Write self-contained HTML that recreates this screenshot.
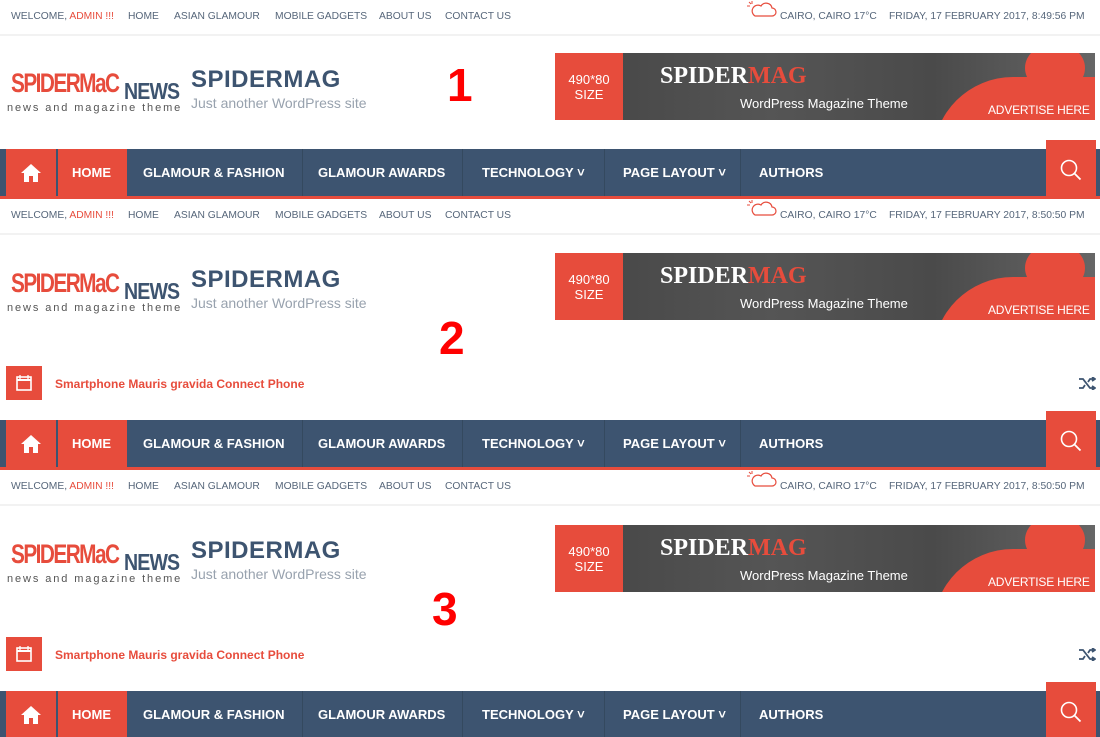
<!DOCTYPE html>
<html><head><meta charset="utf-8"><style>
*{margin:0;padding:0;box-sizing:border-box}
body{width:1100px;height:737px;overflow:hidden;background:#fff;font-family:"Liberation Sans",Arial,sans-serif;position:relative}
.sec{position:absolute;left:0;width:1100px}
.a{position:absolute;white-space:nowrap}
.tb{font-size:10.3px;color:#56667a;top:11px}
.tb b{font-weight:normal;color:#e74c3c}
.hr{position:absolute;left:0;width:1100px;top:34px;height:2px;background:#f2f2f2}
.logo1{font-family:"Liberation Sans",sans-serif;font-weight:bold;color:#e74c3c;font-size:27px;letter-spacing:-2px;transform:scaleX(.77);transform-origin:left;left:11px;top:68px}
.logo2{font-weight:bold;color:#3d5470;font-size:23px;letter-spacing:-1px;transform:scaleX(.85);transform-origin:left;left:124px;top:78px}
.tag{font-size:11px;letter-spacing:1.9px;color:#555;left:7px;top:102px}
.title{font-size:24px;color:#3d5470;font-weight:bold;left:191px;top:66px;letter-spacing:.5px}
.sub{font-size:14px;color:#98a2ae;left:191px;top:95px}
.ban{position:absolute;left:555px;top:53px;width:540px;height:67px;background:linear-gradient(90deg,#444 0%,#555 40%,#4a4a4a 70%,#666 100%);overflow:hidden}
.ban .sz{position:absolute;left:0;top:0;width:68px;height:67px;background:#e74c3c;color:#fff;font-size:13px;text-align:center;padding-top:19px;line-height:15px}
.ban .blob{position:absolute;left:378px;top:24px;width:190px;height:110px;border-radius:80px 0 0 0;background:#e74c3c}
.ban .blob2{position:absolute;left:470px;top:-10px;width:60px;height:50px;border-radius:50%;background:#e74c3c}
.ban .sp{position:absolute;left:105px;top:10px;font-family:"Liberation Serif",serif;font-weight:bold;font-size:24px;color:#fff}
.ban .sp i{font-style:normal;color:#e74c3c}
.ban .wp{position:absolute;left:185px;top:43px;color:#fff;font-size:13px;white-space:nowrap}
.ban .ad{position:absolute;left:433px;top:50px;color:#fff;font-size:12px;letter-spacing:-.2px;white-space:nowrap}
.nav{position:absolute;left:0;width:1100px;height:50px;background:#3d5470;border-bottom:3px solid #e74c3c}
.nav .home{position:absolute;left:6px;top:0;width:50px;height:47px;background:#e74c3c}
.nav .hact{position:absolute;left:58px;top:0;width:69px;height:47px;background:#e74c3c}
.nav .it{position:absolute;top:16px;color:#fff;font-weight:bold;font-size:13px;white-space:nowrap}
.nav .sep{position:absolute;top:0;width:1px;height:47px;background:#34495f}
.srch{position:absolute;left:1046px;width:50px;height:57px;background:#e74c3c}
.num{font-weight:bold;color:#f00;font-size:46px}
.tk{position:absolute;left:6px;width:36px;height:34px;background:#e74c3c}
.tkt{font-weight:bold;color:#e74c3c;font-size:12px;left:55px}
</style></head><body>

<div class="sec" style="top:0;height:200px">
 <div class="a tb" style="left:11px">WELCOME, <b>ADMIN !!!</b></div>
 <div class="a tb" style="left:128px">HOME</div><div class="a tb" style="left:174px">ASIAN GLAMOUR</div><div class="a tb" style="left:275px">MOBILE GADGETS</div><div class="a tb" style="left:379px">ABOUT US</div><div class="a tb" style="left:445px">CONTACT US</div>
 <svg class="a" style="left:746px;top:0" width="32" height="20" viewBox="0 0 32 20"><path d="M6 1v3M1 6h3M3 2l2 2" stroke="#e74c3c" fill="none"/><path d="M9 16h17a4 4 0 0 0 0-8a6 6 0 0 0-11-2a4 4 0 0 0-6 10z" stroke="#e74c3c" fill="none" stroke-width="1.2"/></svg>
 <div class="a tb" style="left:780px">CAIRO, CAIRO 17°C</div><div class="a tb" style="left:889px">FRIDAY, 17 FEBRUARY 2017, 8:49:56 PM</div>
 <div class="hr"></div>
 <div class="a logo1">SPIDERMaC</div><div class="a logo2">NEWS</div><div class="a tag">news and magazine theme</div>
 <div class="a title">SPIDERMAG</div><div class="a sub">Just another WordPress site</div>
 <div class="a num" style="left:447px;top:58px">1</div>
 <div class="ban"><div class="blob"></div><div class="blob2"></div><div class="sz">490*80<br>SIZE</div><div class="sp">SPIDER<i>MAG</i></div><div class="wp">WordPress Magazine Theme</div><div class="ad">ADVERTISE HERE</div></div>
 <div class="nav" style="top:149px"><div class="home"><svg style="position:absolute;left:14px;top:14px" width="22" height="20" viewBox="0 0 22 20"><path d="M11 1L1 10h3v9h5v-6h4v6h5v-9h3z" fill="#fff"/></svg></div><div class="hact"></div>
 <div class="it" style="left:72px">HOME</div><div class="it" style="left:143px">GLAMOUR &amp; FASHION</div><div class="sep" style="left:302px"></div><div class="it" style="left:318px">GLAMOUR AWARDS</div><div class="sep" style="left:462px"></div><div class="it" style="left:482px">TECHNOLOGY ˅</div><div class="sep" style="left:604px"></div><div class="it" style="left:623px">PAGE LAYOUT ˅</div><div class="sep" style="left:740px"></div><div class="it" style="left:759px">AUTHORS</div></div>
 <div class="srch" style="top:140px"><svg style="position:absolute;left:13px;top:18px" width="24" height="24" viewBox="0 0 24 24"><circle cx="10" cy="10" r="7.5" stroke="#fff" stroke-width="1.6" fill="none"/><path d="M15.5 15.5l6 6" stroke="#fff" stroke-width="1.8"/></svg></div>
</div>

<div class="sec" style="top:199px;height:272px">
 <div class="a tb" style="left:11px">WELCOME, <b>ADMIN !!!</b></div>
 <div class="a tb" style="left:128px">HOME</div><div class="a tb" style="left:174px">ASIAN GLAMOUR</div><div class="a tb" style="left:275px">MOBILE GADGETS</div><div class="a tb" style="left:379px">ABOUT US</div><div class="a tb" style="left:445px">CONTACT US</div>
 <svg class="a" style="left:746px;top:0" width="32" height="20" viewBox="0 0 32 20"><path d="M6 1v3M1 6h3M3 2l2 2" stroke="#e74c3c" fill="none"/><path d="M9 16h17a4 4 0 0 0 0-8a6 6 0 0 0-11-2a4 4 0 0 0-6 10z" stroke="#e74c3c" fill="none" stroke-width="1.2"/></svg>
 <div class="a tb" style="left:780px">CAIRO, CAIRO 17°C</div><div class="a tb" style="left:889px">FRIDAY, 17 FEBRUARY 2017, 8:50:50 PM</div>
 <div class="hr"></div>
 <div class="a logo1" style="top:69px">SPIDERMaC</div><div class="a logo2" style="top:79px">NEWS</div><div class="a tag" style="top:103px">news and magazine theme</div>
 <div class="a title" style="top:67px">SPIDERMAG</div><div class="a sub" style="top:96px">Just another WordPress site</div>
 <div class="a num" style="left:439px;top:112px">2</div>
 <div class="ban" style="top:54px"><div class="blob"></div><div class="blob2"></div><div class="sz">490*80<br>SIZE</div><div class="sp">SPIDER<i>MAG</i></div><div class="wp">WordPress Magazine Theme</div><div class="ad">ADVERTISE HERE</div></div>
 <div class="tk" style="top:167px"><svg style="position:absolute;left:9px;top:8px" width="18" height="18" viewBox="0 0 18 18"><rect x="2" y="3" width="14" height="13" fill="none" stroke="#fff" stroke-width="1.6"/><path d="M2 6h14" stroke="#fff" stroke-width="2"/><path d="M5 1v4M13 1v4" stroke="#fff" stroke-width="1.3"/></svg></div>
 <div class="a tkt" style="top:178px">Smartphone Mauris gravida Connect Phone</div>
 <svg class="a" style="left:1079px;top:178px" width="17" height="13" viewBox="0 0 17 13"><path d="M0 2h4l7 9h5M0 11h4l2-3M9 5l2-3h5M13 0l3 2-3 2M13 9l3 2-3 2" stroke="#3d5470" stroke-width="1.8" fill="none"/></svg>
 <div class="nav" style="top:221px"><div class="home"><svg style="position:absolute;left:14px;top:14px" width="22" height="20" viewBox="0 0 22 20"><path d="M11 1L1 10h3v9h5v-6h4v6h5v-9h3z" fill="#fff"/></svg></div><div class="hact"></div>
 <div class="it" style="left:72px">HOME</div><div class="it" style="left:143px">GLAMOUR &amp; FASHION</div><div class="sep" style="left:302px"></div><div class="it" style="left:318px">GLAMOUR AWARDS</div><div class="sep" style="left:462px"></div><div class="it" style="left:482px">TECHNOLOGY ˅</div><div class="sep" style="left:604px"></div><div class="it" style="left:623px">PAGE LAYOUT ˅</div><div class="sep" style="left:740px"></div><div class="it" style="left:759px">AUTHORS</div></div>
 <div class="srch" style="top:212px"><svg style="position:absolute;left:13px;top:18px" width="24" height="24" viewBox="0 0 24 24"><circle cx="10" cy="10" r="7.5" stroke="#fff" stroke-width="1.6" fill="none"/><path d="M15.5 15.5l6 6" stroke="#fff" stroke-width="1.8"/></svg></div>
</div>

<div class="sec" style="top:470px;height:267px;overflow:hidden">
 <div class="a tb" style="left:11px">WELCOME, <b>ADMIN !!!</b></div>
 <div class="a tb" style="left:128px">HOME</div><div class="a tb" style="left:174px">ASIAN GLAMOUR</div><div class="a tb" style="left:275px">MOBILE GADGETS</div><div class="a tb" style="left:379px">ABOUT US</div><div class="a tb" style="left:445px">CONTACT US</div>
 <svg class="a" style="left:746px;top:0" width="32" height="20" viewBox="0 0 32 20"><path d="M6 1v3M1 6h3M3 2l2 2" stroke="#e74c3c" fill="none"/><path d="M9 16h17a4 4 0 0 0 0-8a6 6 0 0 0-11-2a4 4 0 0 0-6 10z" stroke="#e74c3c" fill="none" stroke-width="1.2"/></svg>
 <div class="a tb" style="left:780px">CAIRO, CAIRO 17°C</div><div class="a tb" style="left:889px">FRIDAY, 17 FEBRUARY 2017, 8:50:50 PM</div>
 <div class="hr"></div>
 <div class="a logo1" style="top:69px">SPIDERMaC</div><div class="a logo2" style="top:79px">NEWS</div><div class="a tag" style="top:103px">news and magazine theme</div>
 <div class="a title" style="top:67px">SPIDERMAG</div><div class="a sub" style="top:96px">Just another WordPress site</div>
 <div class="a num" style="left:432px;top:112px">3</div>
 <div class="ban" style="top:55px"><div class="blob"></div><div class="blob2"></div><div class="sz">490*80<br>SIZE</div><div class="sp">SPIDER<i>MAG</i></div><div class="wp">WordPress Magazine Theme</div><div class="ad">ADVERTISE HERE</div></div>
 <div class="tk" style="top:167px"><svg style="position:absolute;left:9px;top:8px" width="18" height="18" viewBox="0 0 18 18"><rect x="2" y="3" width="14" height="13" fill="none" stroke="#fff" stroke-width="1.6"/><path d="M2 6h14" stroke="#fff" stroke-width="2"/><path d="M5 1v4M13 1v4" stroke="#fff" stroke-width="1.3"/></svg></div>
 <div class="a tkt" style="top:178px">Smartphone Mauris gravida Connect Phone</div>
 <svg class="a" style="left:1079px;top:178px" width="17" height="13" viewBox="0 0 17 13"><path d="M0 2h4l7 9h5M0 11h4l2-3M9 5l2-3h5M13 0l3 2-3 2M13 9l3 2-3 2" stroke="#3d5470" stroke-width="1.8" fill="none"/></svg>
 <div class="nav" style="top:221px"><div class="home"><svg style="position:absolute;left:14px;top:14px" width="22" height="20" viewBox="0 0 22 20"><path d="M11 1L1 10h3v9h5v-6h4v6h5v-9h3z" fill="#fff"/></svg></div><div class="hact"></div>
 <div class="it" style="left:72px">HOME</div><div class="it" style="left:143px">GLAMOUR &amp; FASHION</div><div class="sep" style="left:302px"></div><div class="it" style="left:318px">GLAMOUR AWARDS</div><div class="sep" style="left:462px"></div><div class="it" style="left:482px">TECHNOLOGY ˅</div><div class="sep" style="left:604px"></div><div class="it" style="left:623px">PAGE LAYOUT ˅</div><div class="sep" style="left:740px"></div><div class="it" style="left:759px">AUTHORS</div></div>
 <div class="srch" style="top:212px"><svg style="position:absolute;left:13px;top:18px" width="24" height="24" viewBox="0 0 24 24"><circle cx="10" cy="10" r="7.5" stroke="#fff" stroke-width="1.6" fill="none"/><path d="M15.5 15.5l6 6" stroke="#fff" stroke-width="1.8"/></svg></div>
</div>
</body></html>
